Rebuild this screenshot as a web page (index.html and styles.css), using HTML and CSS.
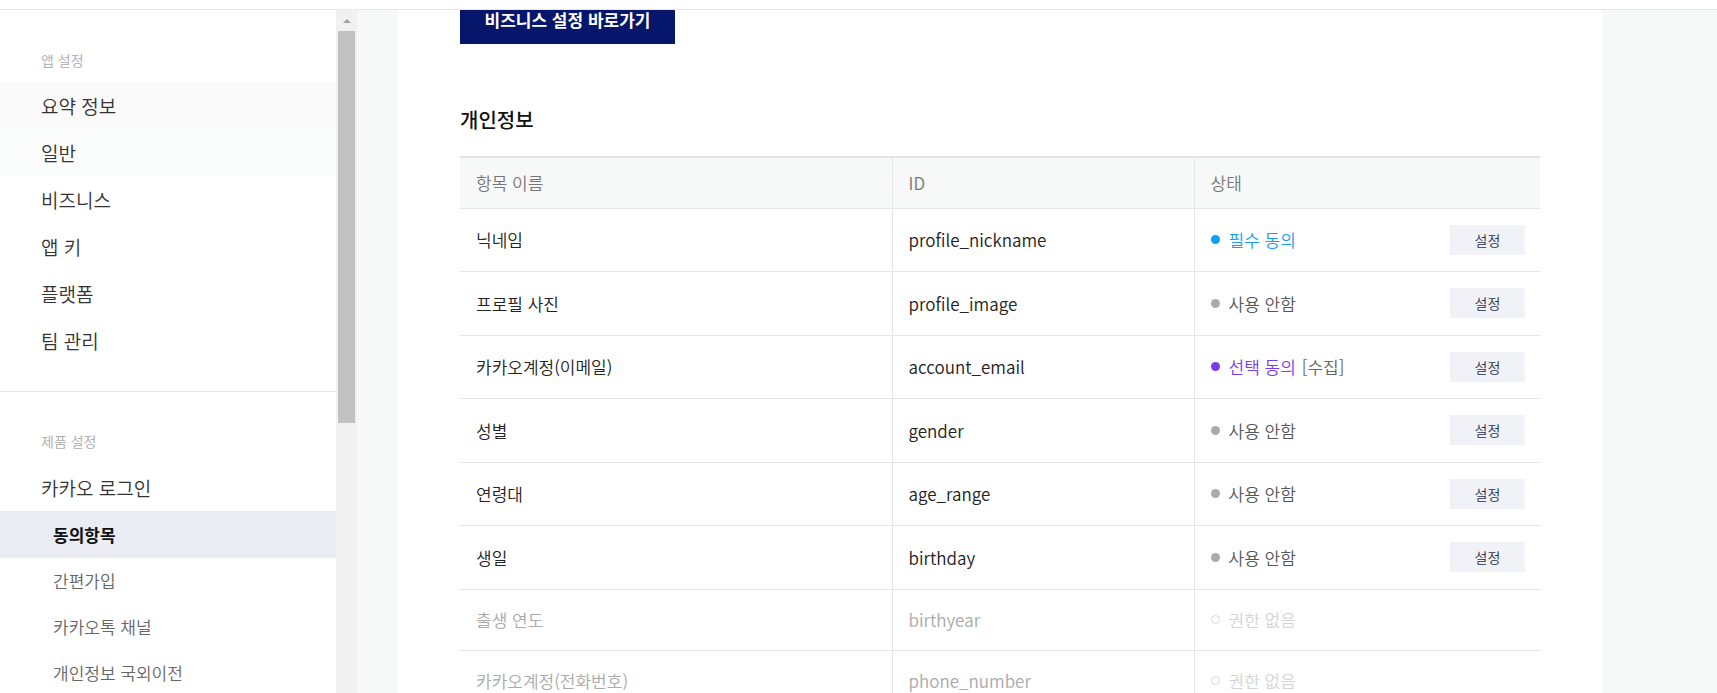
FILE: index.html
```html
<!DOCTYPE html>
<html lang="ko">
<head>
<meta charset="utf-8">
<title>동의항목</title>
<link rel="stylesheet" href="styles.css">
</head>
<body>
<div class="topbar"></div>
<div class="layout">
  <aside class="sidebar">
    <nav class="nav">
      <div class="nav-label nav-label-first">앱 설정</div>
      <a class="nav-item hover1">요약 정보</a>
      <a class="nav-item hover2">일반</a>
      <a class="nav-item">비즈니스</a>
      <a class="nav-item">앱 키</a>
      <a class="nav-item">플랫폼</a>
      <a class="nav-item">팀 관리</a>
      <div class="nav-divider"></div>
      <div class="nav-label">제품 설정</div>
      <a class="nav-item">카카오 로그인</a>
      <a class="nav-sub active">동의항목</a>
      <a class="nav-sub">간편가입</a>
      <a class="nav-sub">카카오톡 채널</a>
      <a class="nav-sub">개인정보 국외이전</a>
    </nav>
    <div class="scrollbar">
      <div class="scroll-up"><span class="arrow"></span></div>
      <div class="scroll-thumb"></div>
    </div>
  </aside>
  <main class="main">
    <section class="panel">
      <button class="biz-btn">비즈니스 설정 바로가기</button>
      <h2 class="section-title">개인정보</h2>
      <table class="consent">
        <thead>
          <tr>
            <th class="c-name">항목 이름</th>
            <th class="c-id">ID</th>
            <th class="c-status">상태</th>
          </tr>
        </thead>
        <tbody>
          <tr>
            <td>닉네임</td>
            <td>profile_nickname</td>
            <td><div class="status"><span class="state req"><i class="dot"></i>필수 동의</span><button class="set-btn">설정</button></div></td>
          </tr>
          <tr class="alt">
            <td>프로필 사진</td>
            <td>profile_image</td>
            <td><div class="status"><span class="state off"><i class="dot"></i>사용 안함</span><button class="set-btn">설정</button></div></td>
          </tr>
          <tr>
            <td>카카오계정(이메일)</td>
            <td>account_email</td>
            <td><div class="status"><span class="state opt"><i class="dot"></i>선택 동의<span class="note">[수집]</span></span><button class="set-btn">설정</button></div></td>
          </tr>
          <tr class="alt">
            <td>성별</td>
            <td>gender</td>
            <td><div class="status"><span class="state off"><i class="dot"></i>사용 안함</span><button class="set-btn">설정</button></div></td>
          </tr>
          <tr>
            <td>연령대</td>
            <td>age_range</td>
            <td><div class="status"><span class="state off"><i class="dot"></i>사용 안함</span><button class="set-btn">설정</button></div></td>
          </tr>
          <tr class="alt">
            <td>생일</td>
            <td>birthday</td>
            <td><div class="status"><span class="state off"><i class="dot"></i>사용 안함</span><button class="set-btn">설정</button></div></td>
          </tr>
          <tr class="disabled">
            <td>출생 연도</td>
            <td>birthyear</td>
            <td><div class="status"><span class="state none"><i class="dot"></i>권한 없음</span></div></td>
          </tr>
          <tr class="disabled">
            <td>카카오계정(전화번호)</td>
            <td>phone_number</td>
            <td><div class="status"><span class="state none"><i class="dot"></i>권한 없음</span></div></td>
          </tr>
        </tbody>
      </table>
    </section>
  </main>
</div>
</body>
</html>
```

FILE: styles.css
```css
* { box-sizing: border-box; }
html, body { margin: 0; padding: 0; }
body {
  width: 1717px;
  height: 693px;
  overflow: hidden;
  font-family: "Noto Sans CJK KR", "Noto Sans", sans-serif;
  font-weight: 350;
  color: #222;
  background: #fff;
}
.topbar {
  height: 10px;
  background: #fff;
  border-bottom: 1px solid #e6e6e6;
}
.layout {
  display: flex;
  height: 683px;
}
.sidebar {
  display: flex;
  width: 357px;
  flex: none;
  background: #fff;
}
.nav {
  width: 336px;
  display: flex;
  flex-direction: column;
}
.nav-label {
  font-size: 14px;
  line-height: 20px;
  color: #aaa;
  padding: 39px 0 0 41px;
  margin-bottom: 13px;
}
.nav-label-first { padding-top: 40px; margin-bottom: 12px; }
.nav-item {
  display: block;
  height: 47px;
  line-height: 47px;
  padding-left: 41px;
  font-size: 19px;
  color: #333;
  flex: none;
}
.hover1 { background: #fafafa; }
.hover2 { background: #fbfcfc; }
.nav-divider {
  height: 1px;
  background: #e6e6e6;
  margin-top: 27px;
  flex: none;
}
.nav-sub {
  display: block;
  height: 46px;
  line-height: 46px;
  padding-left: 53px;
  font-size: 17px;
  color: #666;
  flex: none;
}
.nav-sub.active {
  height: 47px;
  line-height: 47px;
  background: #eaedf4;
  color: #111;
  font-weight: 700;
}
.scrollbar {
  width: 21px;
  background: #f1f1f1;
  display: flex;
  flex-direction: column;
  padding: 0 2px;
}
.scroll-up {
  height: 21px;
  display: flex;
  align-items: center;
  justify-content: center;
}
.arrow {
  width: 0; height: 0;
  border-left: 4px solid transparent;
  border-right: 4px solid transparent;
  border-bottom: 4px solid #a3a3a3;
}
.scroll-thumb {
  height: 392px;
  background: #c1c1c1;
}
.main {
  flex: 1;
  background: #f7f8f8;
  padding-left: 41px;
}
.panel {
  width: 1205px;
  height: 100%;
  background: #fff;
  padding: 0 63px 0 62px;
}
.biz-btn {
  display: block;
  width: 215px;
  height: 34px;
  border: 0;
  margin: 0;
  padding: 0;
  background: #06166a;
  color: #fff;
  font-family: inherit;
  font-size: 17px;
  font-weight: 700;
  line-height: 20px;
  padding-bottom: 14px;
}
.section-title {
  margin: 62px 0 22px;
  font-size: 20px;
  line-height: 28px;
  font-weight: 500;
  color: #111;
}
.consent {
  width: 1080px;
  border-collapse: collapse;
  table-layout: fixed;
  border-top: 2px solid #e5e5e5;
}
.consent th, .consent td {
  text-align: left;
  padding: 0 15px 0 16px;
  border-bottom: 1px solid #e5e5e5;
  vertical-align: middle;
}
.consent th + th, .consent td + td { border-left: 1px solid #e5e5e5; }
.consent th {
  height: 51px;
  background: #f7f8f8;
  font-weight: 350;
  font-size: 17px;
  color: #777;
}
.c-name { width: 432px; }
.c-id { width: 302px; }
.consent td {
  height: 63px;
  font-size: 17px;
  color: #222;
}
.consent tr.alt td { height: 64px; }
.consent tr.disabled td { height: 61px; color: #aaa; }
.status {
  display: flex;
  align-items: center;
  justify-content: space-between;
}
.state {
  display: flex;
  align-items: center;
  color: #555;
}
.dot {
  width: 9px;
  height: 9px;
  border-radius: 50%;
  margin-right: 9px;
  background: #aaa;
}
.state.req { color: #1a9bf2; }
.state.req .dot { background: #0b9ef7; }
.state.opt { color: #7a3cf0; }
.state.opt .dot { background: #7a3cf0; }
.note { color: #666; margin-left: 6px; }
.state.none { color: #d4d4d4; }
.state.none .dot { background: #fff; border: 1px solid #d8d8d8; }
.set-btn {
  width: 75px;
  height: 30px;
  border: 0;
  background: #f0f2f8;
  color: #2a2f48;
  font-family: inherit;
  font-weight: 350;
  font-size: 14px;
  padding: 0;
}
```
